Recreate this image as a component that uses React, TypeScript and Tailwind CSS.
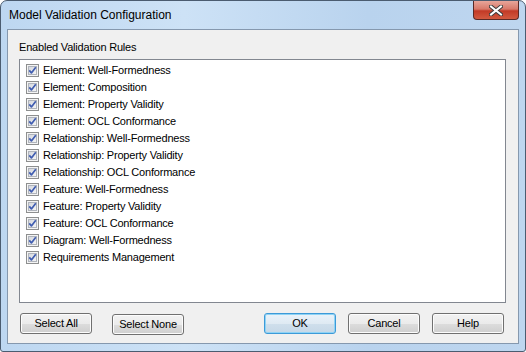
import React from "react"

const rules = [
  "Element: Well-Formedness",
  "Element: Composition",
  "Element: Property Validity",
  "Element: OCL Conformance",
  "Relationship: Well-Formedness",
  "Relationship: Property Validity",
  "Relationship: OCL Conformance",
  "Feature: Well-Formedness",
  "Feature: Property Validity",
  "Feature: OCL Conformance",
  "Diagram: Well-Formedness",
  "Requirements Management",
]

function CheckBox() {
  return (
    <svg width="13" height="13" viewBox="0 0 13 13" className="shrink-0">
      <defs>
        <linearGradient id="cbfill" x1="0" y1="0" x2="1" y2="1">
          <stop offset="0" stopColor="#d3d6dc" />
          <stop offset="1" stopColor="#f6f6f6" />
        </linearGradient>
      </defs>
      <rect x="0.5" y="0.5" width="12" height="12" fill="#f4f4f4" stroke="#8e8f8f" />
      <rect x="2.5" y="2.5" width="8" height="8" fill="url(#cbfill)" stroke="#b0b4bc" />
      <path d="M3.3 6.4 L5.4 8.9 L9.8 3.2" fill="none" stroke="#3f5cb0" strokeWidth="1.7" strokeLinejoin="round" />
    </svg>
  )
}

function Btn({ label, primary }: { label: string; primary?: boolean }) {
  return (
    <button
      className={`w-[72px] h-[21px] rounded-[3px] border text-[11px] tracking-[-0.2px] leading-none text-black ${
        primary
          ? "border-[#3c9ad8] shadow-[inset_0_0_0_1px_#8fd3f5] bg-[linear-gradient(#eaf3fa_0%,#dfeaf3_50%,#cfdfec_51%,#c6d8e7_100%)]"
          : "border-[#707070] shadow-[inset_0_0_0_1px_#fcfcfc] bg-[linear-gradient(#f2f2f2_0%,#ebebeb_50%,#dddddd_51%,#cfcfcf_100%)]"
      }`}
    >
      {label}
    </button>
  )
}

export default function App() {
  return (
    <div className="w-[526px] h-[352px] relative rounded-t-[7px] rounded-b-[3px] border border-[#4b5c70] bg-[linear-gradient(90deg,#bdd7f1_0%,#cde2f6_35%,#b9d3ee_70%,#bed6ef_100%)] px-[6px] pb-[7px] flex flex-col" style={{ fontFamily: '"Liberation Sans", Arial, sans-serif' }}>
      <div className="h-[28px] flex items-center pl-[2px] text-[12px] text-black">
        Model Validation Configuration
      </div>
      <div className="absolute top-0 right-[6px] w-[46px] h-[19px] rounded-b-[4px] border border-t-0 border-[#5a2a26] bg-[linear-gradient(#e8a69a_0%,#d8796a_45%,#c23a26_55%,#d25a40_100%)] flex items-center justify-center">
        <svg width="14" height="11" viewBox="0 0 14 11">
          <path d="M2 1.5 L12 9.5 M12 1.5 L2 9.5" stroke="#3b3b3b" strokeWidth="4" strokeLinecap="square" />
          <path d="M2 1.5 L12 9.5 M12 1.5 L2 9.5" stroke="#ffffff" strokeWidth="2" strokeLinecap="square" />
        </svg>
      </div>
      <div className="h-[315px] border border-[#8598ae] bg-[#f0f0f0] pl-[11px] pr-[12px] pt-[10px] flex flex-col">
        <div className="text-[11px] tracking-[-0.2px] leading-[15px] text-black mb-[4px]">Enabled Validation Rules</div>
        <div className="h-[244px] border border-[#828790] bg-white pt-[2px] pl-[6px]">
          {rules.map((r) => (
            <div key={r} className="h-[17px] flex items-center gap-[4px] text-[11px] tracking-[-0.2px] text-black">
              <CheckBox />
              <span>{r}</span>
            </div>
          ))}
        </div>
        <div className="mt-[8px] ml-[1px] mr-[2px] flex items-center">
          <Btn label="Select All" />
          <div className="ml-[20px]">
            <Btn label="Select None" />
          </div>
          <div className="flex-1" />
          <div className="flex gap-[12px]">
            <Btn label="OK" primary />
            <Btn label="Cancel" />
            <Btn label="Help" />
          </div>
        </div>
      </div>
    </div>
  )
}
